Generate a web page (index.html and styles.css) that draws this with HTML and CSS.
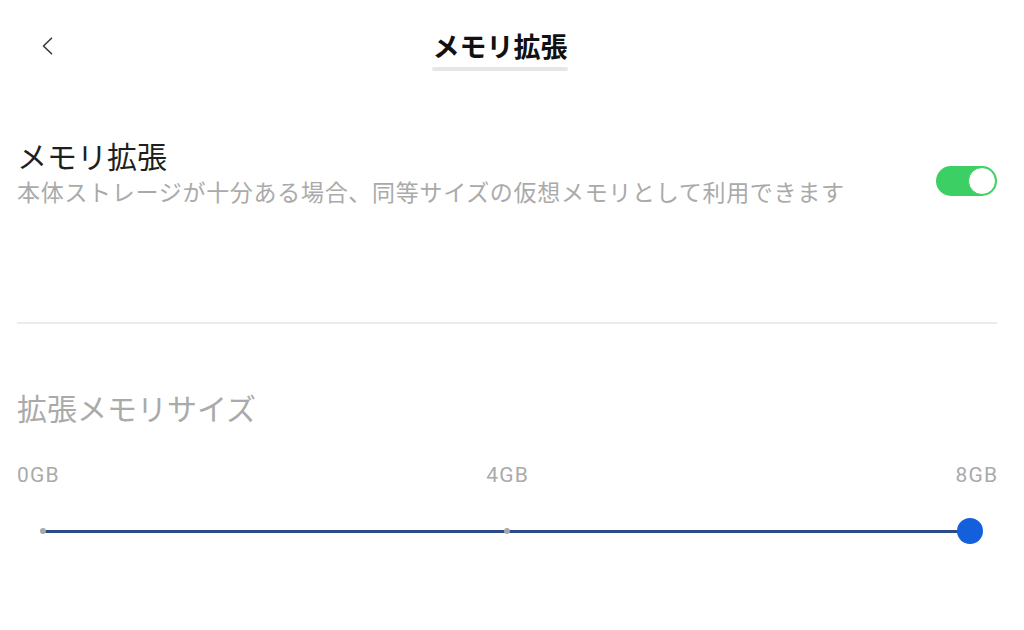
FILE: index.html
```html
<!DOCTYPE html>
<html lang="ja">
<head>
<meta charset="utf-8">
<title>メモリ拡張</title>
<link rel="stylesheet" href="styles.css">
</head>
<body>
<div class="page">
  <header class="header">
    <div class="back">
      <svg width="12" height="18" viewBox="0 0 12 18" aria-hidden="true">
        <path d="M10.5 1.2 L2.5 9 L10.5 16.8" fill="none" stroke="#3a3a3a" stroke-width="1.6" stroke-linecap="round" stroke-linejoin="round"/>
      </svg>
    </div>
    <div class="title-wrap">
      <h1 class="title">メモリ拡張</h1>
      <div class="title-bar"></div>
    </div>
    <div></div>
  </header>

  <section class="setting">
    <div class="setting-text">
      <div class="setting-title">メモリ拡張</div>
      <div class="setting-desc">本体ストレージが十分ある場合、同等サイズの仮想メモリとして利用できます</div>
    </div>
    <div class="toggle"><div class="knob"></div></div>
  </section>

  <div class="divider"></div>

  <section class="size">
    <div class="size-title">拡張メモリサイズ</div>
    <div class="labels">
      <span>0GB</span>
      <span>4GB</span>
      <span>8GB</span>
    </div>
    <div class="slider">
      <div class="track">
        <span class="dot dot-start"></span>
        <span class="dot dot-mid"></span>
        <span class="thumb"></span>
      </div>
    </div>
  </section>
</div>
</body>
</html>
```

FILE: styles.css
```css
html, body {
  margin: 0;
  padding: 0;
  background: #ffffff;
}

body {
  font-family: "Noto Sans CJK JP", "Noto Sans", sans-serif;
  color: #1f1f1f;
}

.page {
  padding: 0 27px 0 17px;
}

.header {
  display: grid;
  grid-template-columns: 1fr auto 1fr;
  align-items: start;
  padding-top: 28px;
}

.back {
  margin-left: 24px;
  height: 36px;
  display: flex;
  align-items: center;
}

.back svg {
  display: block;
}

.title-wrap {
  display: flex;
  flex-direction: column;
  align-items: center;
  margin-left: -14px;
}

.title {
  margin: 0;
  font-size: 27px;
  line-height: 36px;
  font-weight: 700;
  color: #111111;
}

.title-bar {
  margin-top: 3px;
  width: 136px;
  height: 4px;
  border-radius: 2px;
  background: #e6e6e6;
}

.setting {
  display: flex;
  justify-content: space-between;
  align-items: flex-start;
  padding-top: 64px;
}

.setting-title {
  font-size: 30px;
  line-height: 40px;
  color: #1f1f1f;
}

.setting-desc {
  font-size: 23px;
  line-height: 32px;
  letter-spacing: 0.7px;
  color: #aaaaaa;
}

.toggle {
  margin-top: 31px;
  width: 61px;
  height: 30px;
  border-radius: 15px;
  background: #3ccf63;
  display: flex;
  justify-content: flex-end;
  align-items: center;
  box-sizing: border-box;
  padding: 0 1px;
}

.knob {
  width: 26px;
  height: 26px;
  border-radius: 50%;
  background: #ffffff;
  border: 1.5px solid #3ccf63;
}

.divider {
  margin-top: 115px;
  height: 2px;
  background: #ebebeb;
}

.size {
  padding-top: 63px;
}

.size-title {
  font-size: 30px;
  line-height: 40px;
  color: #aaaaaa;
}

.labels {
  margin-top: 36px;
  display: flex;
  justify-content: space-between;
  font-family: Roboto, "Noto Sans", sans-serif;
  font-size: 21px;
  line-height: 24px;
  letter-spacing: 1.2px;
  color: #aaaaaa;
}

.labels span:last-child {
  margin-right: -1.2px;
}

.slider {
  margin: 31px 27px 0 26px;
  height: 26px;
  display: flex;
  align-items: center;
}

.track {
  position: relative;
  flex: 1;
  height: 3px;
  background: #2c4a87;
}

.dot {
  position: absolute;
  top: 50%;
  width: 6px;
  height: 6px;
  margin: -3px 0 0 -3px;
  border-radius: 50%;
  background: #a8a8a8;
}

.dot-start {
  left: 0;
}

.dot-mid {
  left: 50%;
}

.thumb {
  position: absolute;
  top: 50%;
  left: 100%;
  width: 26px;
  height: 26px;
  margin: -13px 0 0 -13px;
  border-radius: 50%;
  background: #135fdc;
}
```
